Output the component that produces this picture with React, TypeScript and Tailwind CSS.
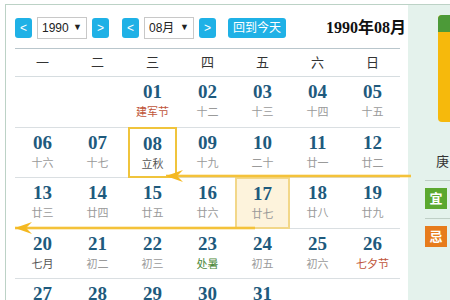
import React from "react";

type Day = { d: string; lunar: string; tone?: "red" | "green" | "dark" };

const weeks: (Day | null)[][] = [
  [null, null, { d: "01", lunar: "建军节", tone: "red" }, { d: "02", lunar: "十二" }, { d: "03", lunar: "十三" }, { d: "04", lunar: "十四" }, { d: "05", lunar: "十五" }],
  [{ d: "06", lunar: "十六" }, { d: "07", lunar: "十七" }, { d: "08", lunar: "立秋", tone: "dark" }, { d: "09", lunar: "十九" }, { d: "10", lunar: "二十" }, { d: "11", lunar: "廿一" }, { d: "12", lunar: "廿二" }],
  [{ d: "13", lunar: "廿三" }, { d: "14", lunar: "廿四" }, { d: "15", lunar: "廿五" }, { d: "16", lunar: "廿六" }, { d: "17", lunar: "廿七" }, { d: "18", lunar: "廿八" }, { d: "19", lunar: "廿九" }],
  [{ d: "20", lunar: "七月", tone: "dark" }, { d: "21", lunar: "初二" }, { d: "22", lunar: "初三" }, { d: "23", lunar: "处暑", tone: "green" }, { d: "24", lunar: "初五" }, { d: "25", lunar: "初六" }, { d: "26", lunar: "七夕节", tone: "red" }],
  [{ d: "27", lunar: "初七" }, { d: "28", lunar: "初八" }, { d: "29", lunar: "初九" }, { d: "30", lunar: "初十" }, { d: "31", lunar: "十一" }, null, null],
];

const weekdays = ["一", "二", "三", "四", "五", "六", "日"];

const toneClass = {
  red: "text-[#c0553a]",
  green: "text-[#4f8a3c]",
  dark: "text-[#555]",
};

const NavBtn = ({ label }: { label: string }) => (
  <div className="w-[17px] h-[20px] rounded-[3px] bg-[#1fb1e6] text-white text-[12px] flex items-center justify-center">
    {label}
  </div>
);

const Select = ({ value }: { value: string }) => (
  <div className="w-[50px] h-[22px] border border-[#c8c8c8] bg-white flex items-center justify-between px-[4px] text-[12px] text-[#222]">
    <span>{value}</span>
    <span className="text-[9px]">▼</span>
  </div>
);

// yellow arrow pointing left
const Arrow = ({ className }: { className: string }) => (
  <div className={`absolute h-[10px] ${className}`}>
    <svg className="absolute inset-0 w-full h-full" preserveAspectRatio="none" viewBox="0 0 100 10">
      <rect x="0" y="3.7" width="100" height="2.6" fill="#f4c23a" />
    </svg>
    <svg className="absolute left-0 top-[-2px] w-[17px] h-[14px]" viewBox="0 0 20 16">
      <path d="M0 8 L20 1 L13 8 L20 15 Z" fill="#f4b820" />
    </svg>
  </div>
);

const App = () => {
  return (
    <div className="w-[450px] h-[300px] overflow-hidden bg-white pt-[4px] pl-[5px]" style={{ fontFamily: '"Liberation Sans", "Noto Sans CJK SC", sans-serif' }}>
      <div className="flex h-full border-t border-l border-[#bcd2c6]">
        {/* calendar */}
        <div className="relative w-[402px] bg-white pl-[9px] pr-[2px] pt-[12px]">
          <div className="flex items-center h-[22px]">
            <NavBtn label="<" />
            <div className="ml-[5px]"><Select value="1990" /></div>
            <div className="ml-[5px]"><NavBtn label=">" /></div>
            <div className="ml-[13px]"><NavBtn label="<" /></div>
            <div className="ml-[5px]"><Select value="08月" /></div>
            <div className="ml-[5px]"><NavBtn label=">" /></div>
            <div className="ml-[12px] w-[58px] h-[20px] rounded-[3px] bg-[#1fb1e6] text-white text-[12px] flex items-center justify-center">
              回到今天
            </div>
            <div className="ml-auto text-[16px] font-bold text-[#111]" style={{ fontFamily: '"Liberation Serif", "Noto Sans CJK SC", serif' }}>
              1990年08月
            </div>
          </div>

          <div className="mt-[9px] w-[385px] border-t border-[#b9c6cc]">
            <div className="grid grid-cols-7 h-[28px] items-center border-b border-[#d6dde0] text-[13px] text-[#333]">
              {weekdays.map((w) => (
                <div key={w} className="text-center">{w}</div>
              ))}
            </div>
            {weeks.map((row, ri) => (
              <div key={ri} className="grid grid-cols-7 h-[50.5px] border-b border-[#dadfe2]">
                {row.map((day, ci) => {
                  const picked = day?.d === "08";
                  const today = day?.d === "17";
                  return (
                    <div
                      key={ci}
                      className={`flex flex-col items-center pt-[4px] ${
                        picked ? "mx-[3px] -my-[1px] border-[2.5px] border-[#f0c43c] pt-[3px]" : ""
                      } ${today ? "-my-[1px] border-2 border-[#f2d789] bg-[#fdf3dc] pt-[3px]" : ""}`}
                    >
                      {day && (
                        <>
                          <span className="text-[19px] font-bold leading-[22px] text-[#1e5a7d]" style={{ fontFamily: '"Liberation Serif", serif' }}>
                            {day.d}
                          </span>
                          <span className={`text-[11px] leading-[18px] ${day.tone ? toneClass[day.tone] : "text-[#9a9a9a]"}`}>
                            {day.lunar}
                          </span>
                        </>
                      )}
                    </div>
                  );
                })}
              </div>
            ))}
          </div>

          <Arrow className="left-[160px] top-[166px] w-[245px]" />
          <Arrow className="left-[9px] top-[218px] w-[240px]" />
        </div>

        {/* side panel */}
        <div className="flex-1 bg-[#e4f2ec] pl-[17px] pt-[10px]">
          <div className="ml-[13px] h-[107px] rounded-l-[4px] overflow-hidden bg-[#f6b90c]">
            <div className="h-[17px] bg-[#4c9a38]" />
          </div>
          <div className="mt-[32px] ml-[11px] text-[13px] text-[#333] leading-[16px]">庚</div>
          <div className="mt-[10px] border-t border-[#bfcfc6]" />
          <div className="mt-[7px] w-[22px] h-[21px] bg-[#5ba82f] text-white text-[13px] font-bold flex items-center justify-center">宜</div>
          <div className="mt-[9px] border-t border-[#bfcfc6]" />
          <div className="mt-[7px] w-[22px] h-[21px] bg-[#e77c1c] text-white text-[13px] font-bold flex items-center justify-center">忌</div>
        </div>
      </div>
    </div>
  );
};

export default App;
